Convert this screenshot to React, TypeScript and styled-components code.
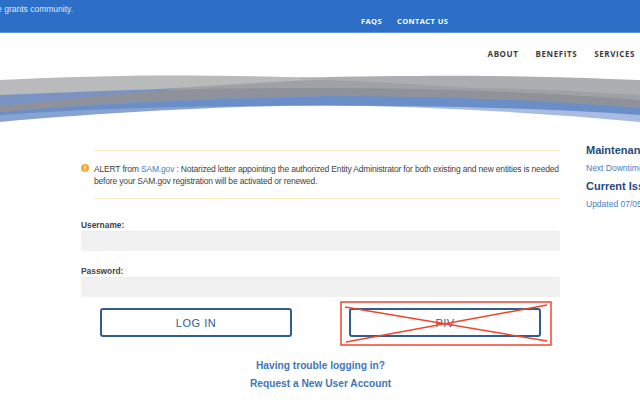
import styled, { createGlobalStyle } from "styled-components";

const GlobalStyle = createGlobalStyle`
  html, body {
    margin: 0;
    padding: 0;
    background: #fff;
    font-family: "Liberation Sans", Arial, sans-serif;
  }
`;

const Page = styled.div`
  width: 640px;
  height: 400px;
  overflow: hidden;
  display: flex;
  flex-direction: column;
`;

const TopBar = styled.div`
  height: 32px;
  flex: none;
  background: #2d6fc6;
  border-bottom: 1px solid #5f92d6;
  display: flex;
`;

const Tagline = styled.div`
  width: 73px;
  flex: none;
  direction: rtl;
  overflow: hidden;
  white-space: nowrap;
  padding-top: 4px;
  color: #dfe9f7;
  font-size: 8.5px;
  line-height: 10px;
`;

const TopLinks = styled.div`
  display: flex;
  gap: 15px;
  margin-left: 288px;
  padding-top: 16px;
  color: #fff;
  font-family: "Open Sans", sans-serif;
  font-size: 7.5px;
  font-weight: 700;
  letter-spacing: 0.4px;
  line-height: 10px;
`;

const MainNav = styled.nav`
  height: 42px;
  flex: none;
  display: flex;
  justify-content: flex-end;
  gap: 17px;
  padding: 16px 5px 0 0;
  box-sizing: border-box;
  color: #3c3c3e;
  font-family: "Open Sans", sans-serif;
  font-size: 8px;
  font-weight: 700;
  letter-spacing: 0.6px;
  line-height: 10px;
`;

const Swoosh = styled.svg`
  display: block;
  flex: none;
  width: 640px;
  height: 50px;
`;

const Body = styled.div`
  display: flex;
  margin-top: 25px;
  padding-left: 81px;
`;

const Content = styled.main`
  width: 479px;
  flex: none;
`;

const Alert = styled.div`
  margin-left: 13px;
  height: 49px;
  box-sizing: border-box;
  border-top: 1px solid #fbe9c6;
  border-bottom: 1px solid #fbe9c6;
  padding-top: 12px;
  position: relative;
  color: #3f3f3f;
  font-size: 8.5px;
  letter-spacing: -0.17px;
  line-height: 12px;
`;

const AlertIcon = styled.svg`
  position: absolute;
  left: -13px;
  top: 13px;
  width: 8px;
  height: 8px;
`;

const AlertLink = styled.span`
  color: #3f7fc4;
`;

const Field = styled.div`
  display: flex;
  flex-direction: column;
  margin-top: ${(p: { $top: number }) => p.$top}px;
`;

const Label = styled.label`
  color: #444;
  font-size: 8.4px;
  font-weight: 700;
  line-height: 11px;
`;

const Input = styled.div`
  height: 20px;
  background: #f1f1f1;
  border-radius: 2px;
  border-top: 1px solid #ececec;
  box-sizing: border-box;
`;

const Actions = styled.div`
  display: flex;
  margin-top: 11px;
  padding-left: 19px;
  gap: 57px;
`;

const ActionButton = styled.button`
  width: 192px;
  height: 29px;
  box-sizing: border-box;
  padding: 0;
  background: #fff;
  border: 2px solid #2f5d8f;
  border-radius: 3px;
  color: #2f5d8f;
  font-family: "Liberation Sans", Arial, sans-serif;
  font-size: 11px;
  letter-spacing: 0.5px;
`;

const Redaction = styled.div`
  position: relative;
`;

const RedactionMark = styled.svg`
  position: absolute;
  left: -9px;
  top: -7px;
  width: 212px;
  height: 45px;
`;

const HelpLinks = styled.div`
  display: flex;
  flex-direction: column;
  align-items: center;
  gap: 5px;
  margin-top: 22px;
  color: #3f76b8;
  font-size: 10.2px;
  font-weight: 700;
  line-height: 13px;
`;

const Sidebar = styled.aside`
  margin: -6px 0 0 26px;
  white-space: nowrap;
`;

const SideTitle = styled.div`
  color: #1f4a7c;
  font-size: 11px;
  font-weight: 700;
  line-height: 13px;
`;

const SideNote = styled.div`
  color: #3f7fc4;
  font-size: 8.5px;
  line-height: 11px;
  margin: 6px 0;
`;

export default function App() {
  return (
    <Page>
      <GlobalStyle />
      <TopBar>
        <Tagline>
          <bdi>the grants community.</bdi>
        </Tagline>
        <TopLinks>
          <span>FAQS</span>
          <span>CONTACT US</span>
        </TopLinks>
      </TopBar>
      <MainNav>
        <span>ABOUT</span>
        <span>BENEFITS</span>
        <span>SERVICES</span>
      </MainNav>
      <Swoosh viewBox="0 75 640 50">
        {/* lightest blue, the lowest edge of the arc */}
        <path d="M0 122 C100 113 220 106 320 105.5 L320 90 L0 100 Z" fill="#88a2d2" />
        <path d="M320 105.5 C430 106 540 113 640 122 L640 100 L320 90 Z" fill="#a9bbe0" />
        {/* main blue */}
        <path d="M0 115 C100 108 220 105.5 320 105.5 C430 105.5 540 108 640 115 L640 95 L320 90 L0 95 Z" fill="#6a8fc8" />
        {/* muted blue on the left */}
        <path d="M0 94 L180 87 L320 87 L320 97 C200 99 100 104 0 112 Z" fill="#7a93c2" />
        {/* dark grey band */}
        <path d="M0 112 C80 105 170 98 320 96 C430 96 540 100 640 108 L640 90 C500 84 400 82 320 82 C230 84 180 87 170 90 C110 94 50 101 0 106 Z" fill="#8f929b" />
        {/* mid grey */}
        <path d="M170 89 C220 82 280 79 320 79 C430 80 540 84 640 95 L640 100 C540 92 430 88 320 88 C270 88 220 88 170 90 Z" fill="#a0a1a6" />
        {/* light grey, left arc */}
        <path d="M0 80 C60 77 120 75.5 170 75.5 C230 75.5 290 76.5 340 79 C280 81 220 85 160 89 C100 91 50 93 0 95 Z" fill="#b9babc" />
        {/* light grey, right arc */}
        <path d="M300 77.5 C360 76.5 420 75.5 470 75.8 C530 76 590 78 640 80 L640 95 C590 92 530 88 470 88 C420 84 360 81 300 79 Z" fill="#adaeb1" />
      </Swoosh>
      <Body>
        <Content>
          <Alert>
            <AlertIcon viewBox="0 0 8 8">
              <circle cx="4" cy="4" r="4" fill="#eeaa33" />
              <rect x="3.4" y="1.5" width="1.2" height="3.2" fill="#fff" />
              <rect x="3.4" y="5.3" width="1.2" height="1.2" fill="#fff" />
            </AlertIcon>
            ALERT from <AlertLink>SAM.gov</AlertLink> : Notarized letter appointing the authorized Entity
            Administrator for both existing and new entities is needed before your SAM.gov registration will be
            activated or renewed.
          </Alert>
          <Field $top={21}>
            <Label>Username:</Label>
            <Input />
          </Field>
          <Field $top={15}>
            <Label>Password:</Label>
            <Input />
          </Field>
          <Actions>
            <ActionButton>LOG IN</ActionButton>
            <Redaction>
              <ActionButton>PIV</ActionButton>
              <RedactionMark viewBox="0 0 212 45">
                <rect x="1" y="1" width="210" height="43" fill="none" stroke="#f0442c" strokeWidth="1.5" />
                <path d="M5 6 L207 40 M6 41 L207 4" stroke="#f0442c" strokeWidth="1.4" fill="none" />
              </RedactionMark>
            </Redaction>
          </Actions>
          <HelpLinks>
            <span>Having trouble logging in?</span>
            <span>Request a New User Account</span>
          </HelpLinks>
        </Content>
        <Sidebar>
          <SideTitle>Maintenance</SideTitle>
          <SideNote>Next Downtime</SideNote>
          <SideTitle>Current Issues</SideTitle>
          <SideNote>Updated 07/05</SideNote>
        </Sidebar>
      </Body>
    </Page>
  );
}
